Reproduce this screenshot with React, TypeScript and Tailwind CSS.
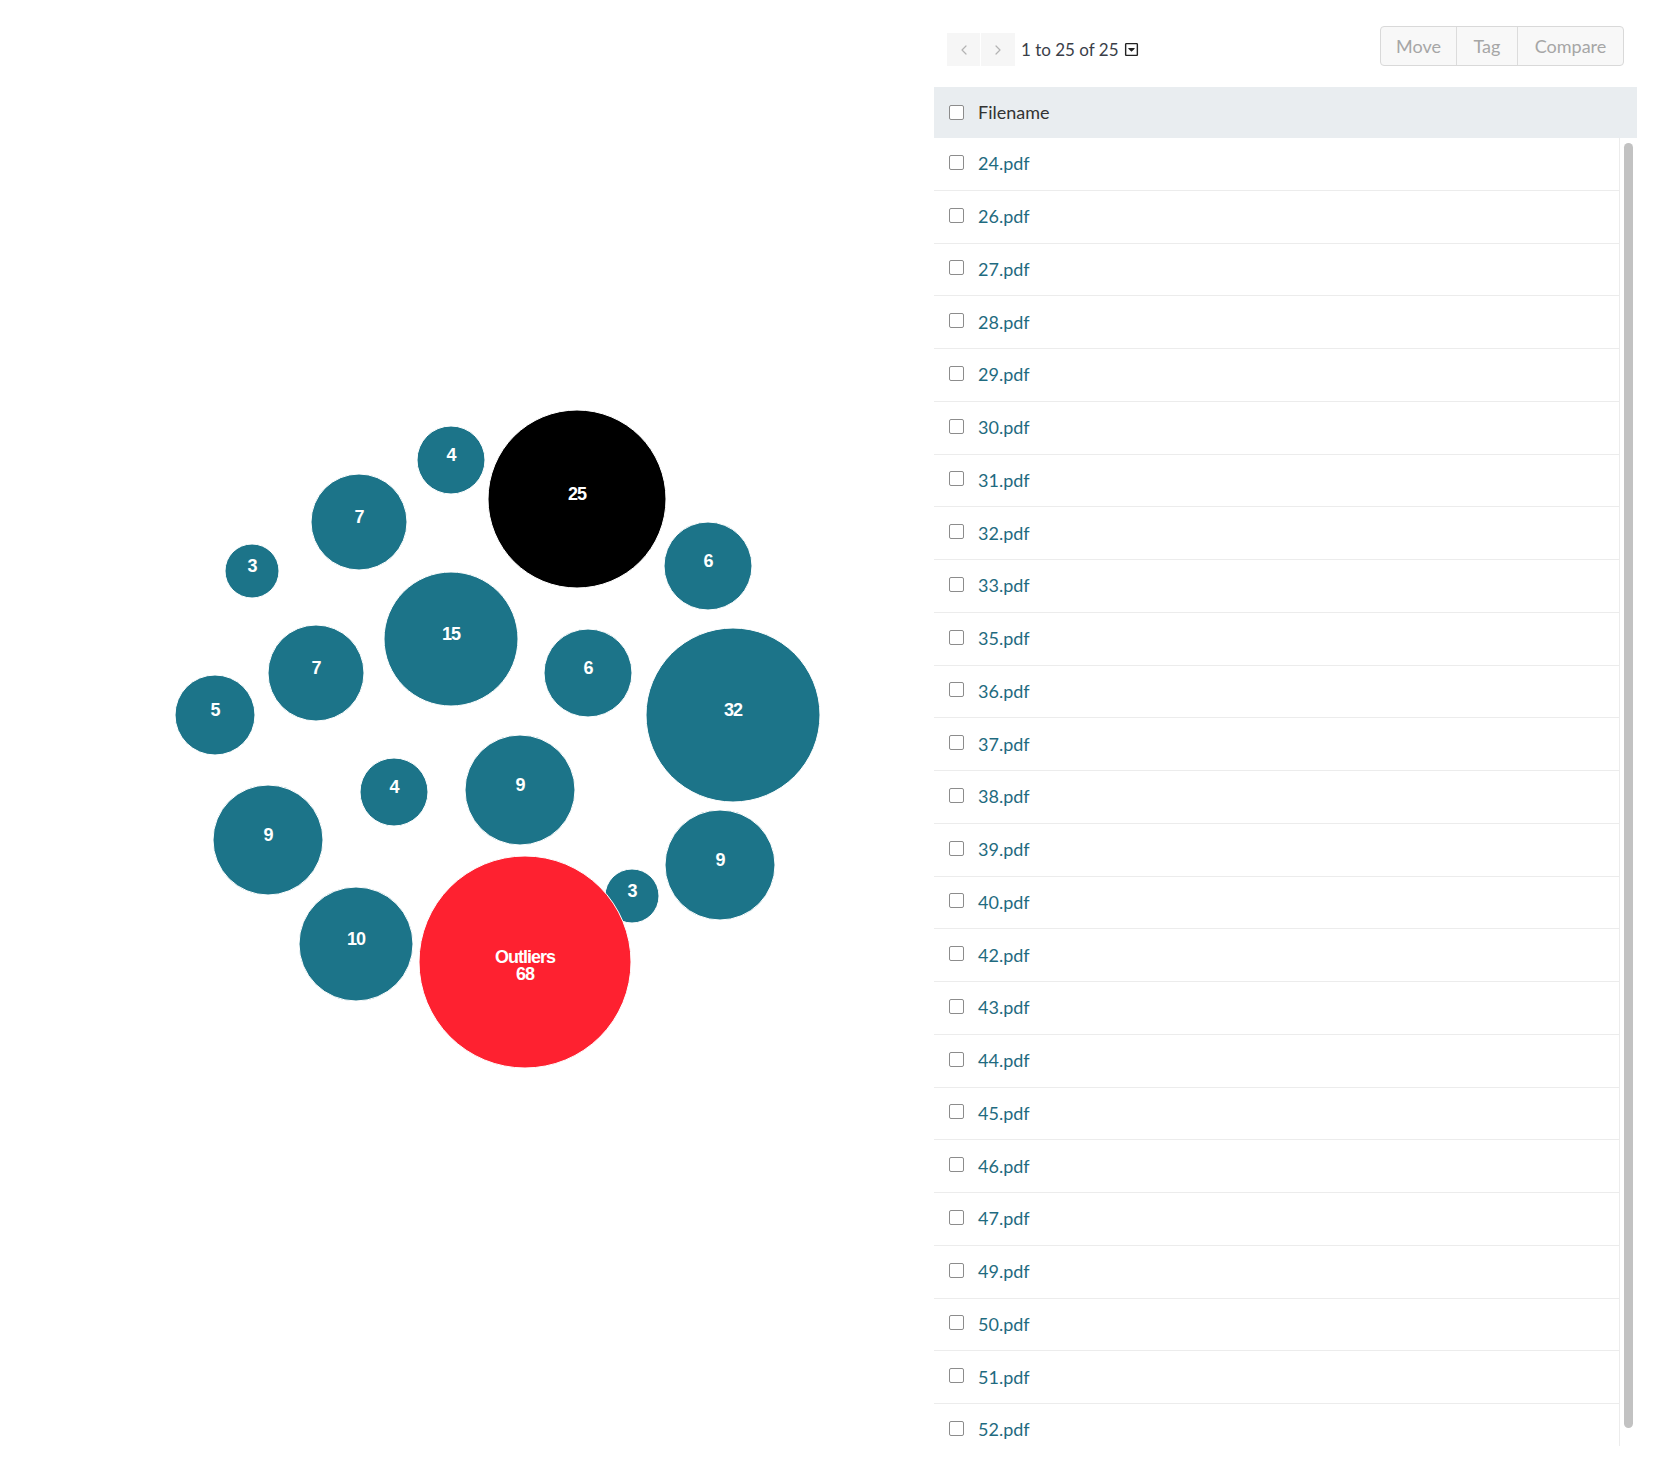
import { ChevronLeft, ChevronRight } from 'lucide-react';
import { FaRegCaretSquareDown } from 'react-icons/fa';

type Bubble = { x: number; y: number; r: number; label: string[]; fill: string };

const TEAL = '#1c7489';

const bubbles: Bubble[] = [
  { x: 451, y: 460, r: 34, label: ['4'], fill: TEAL },
  { x: 577, y: 499, r: 89, label: ['25'], fill: '#000000' },
  { x: 359, y: 522, r: 48, label: ['7'], fill: TEAL },
  { x: 252, y: 571, r: 27, label: ['3'], fill: TEAL },
  { x: 708, y: 566, r: 44, label: ['6'], fill: TEAL },
  { x: 451, y: 639, r: 67, label: ['15'], fill: TEAL },
  { x: 316, y: 673, r: 48, label: ['7'], fill: TEAL },
  { x: 588, y: 673, r: 44, label: ['6'], fill: TEAL },
  { x: 733, y: 715, r: 87, label: ['32'], fill: TEAL },
  { x: 215, y: 715, r: 40, label: ['5'], fill: TEAL },
  { x: 394, y: 792, r: 34, label: ['4'], fill: TEAL },
  { x: 520, y: 790, r: 55, label: ['9'], fill: TEAL },
  { x: 268, y: 840, r: 55, label: ['9'], fill: TEAL },
  { x: 720, y: 865, r: 55, label: ['9'], fill: TEAL },
  { x: 632, y: 896, r: 27, label: ['3'], fill: TEAL },
  { x: 356, y: 944, r: 57, label: ['10'], fill: TEAL },
  { x: 525, y: 962, r: 106, label: ['Outliers', '68'], fill: '#fe2130' },
];

const files = [
  24, 26, 27, 28, 29, 30, 31, 32, 33, 35, 36, 37, 38, 39, 40, 42, 43, 44, 45, 46, 47, 49, 50, 51, 52,
];

function Checkbox() {
  return <span className="block w-[15px] h-[15px] shrink-0 rounded-[2px] border-[1.5px] border-[#8c8c8c] bg-white" />;
}

function BubbleChart() {
  return (
    <svg width={934} height={1474} className="block">
      {bubbles.map((b, i) => (
        <g key={i}>
          <circle cx={b.x} cy={b.y} r={b.r} fill={b.fill} stroke="#ffffff" strokeWidth={1} />
          <text
            x={b.x}
            y={b.y + 1}
            textAnchor="middle"
            fill="#ffffff"
            fontFamily="'Liberation Sans', Arial, sans-serif"
            fontWeight={700}
            fontSize={18}
            letterSpacing={-1}
          >
            {b.label.map((line, j) => (
              <tspan key={j} x={b.x} dy={j === 0 ? 0 : 17}>
                {line}
              </tspan>
            ))}
          </text>
        </g>
      ))}
    </svg>
  );
}

export default function App() {
  return (
    <div className="flex w-[1672px] h-[1474px] bg-white overflow-hidden">
      {/* Cluster chart */}
      <div className="w-[934px] shrink-0">
        <BubbleChart />
      </div>

      {/* File list panel */}
      <div className="w-[703px] shrink-0 pt-[26px] font-['Lato',sans-serif]">
        <div className="flex items-end justify-between h-[40px] pl-[13px] pr-[13px]">
          <div className="flex items-center">
            <button className="flex items-center justify-center w-[33px] h-[33px] bg-[#f6f6f6] text-[#b3b3b3]">
              <ChevronLeft size={16} strokeWidth={1.8} />
            </button>
            <button className="flex items-center justify-center w-[34px] h-[33px] bg-[#f6f6f6] text-[#b3b3b3] ml-px">
              <ChevronRight size={16} strokeWidth={1.8} />
            </button>
            <span className="ml-[6px] text-[17px] text-[#3a3e48] leading-none">1 to 25 of 25</span>
            <FaRegCaretSquareDown className="ml-[5px] text-[#222222]" size={15} />
          </div>
          <div className="flex h-[40px] rounded-[4px] border border-[#d9d9d9] bg-[#f8f8f8] text-[18px] text-[#a6a6a6] overflow-hidden">
            <button className="w-[75px] h-full">Move</button>
            <button className="w-[61px] h-full border-l border-[#dcdcdc]">Tag</button>
            <button className="w-[106px] h-full border-l border-[#dcdcdc]">Compare</button>
          </div>
        </div>

        <div className="mt-[21px] flex items-center h-[51px] bg-[#e9edf0] pl-[15px] gap-[14px]">
          <Checkbox />
          <span className="text-[18px] text-[#333333]">Filename</span>
        </div>

        <div className="flex h-[1308px] overflow-hidden">
          <div className="flex-1">
            {files.map((n) => (
              <div
                key={n}
                className="flex items-center h-[52.75px] border-b border-[#ececec] pl-[15px] gap-[14px]"
              >
                <span className="-mt-[3px]">
                  <Checkbox />
                </span>
                <span className="text-[18px] text-[#1f6b80]">{n}.pdf</span>
              </div>
            ))}
          </div>
          <div className="w-[18px] shrink-0 border-l border-[#ececec] pt-[5px] pl-[4px]">
            <div className="w-[9px] h-[1285px] rounded-full bg-[#c2c2c2]" />
          </div>
        </div>
      </div>
    </div>
  );
}
